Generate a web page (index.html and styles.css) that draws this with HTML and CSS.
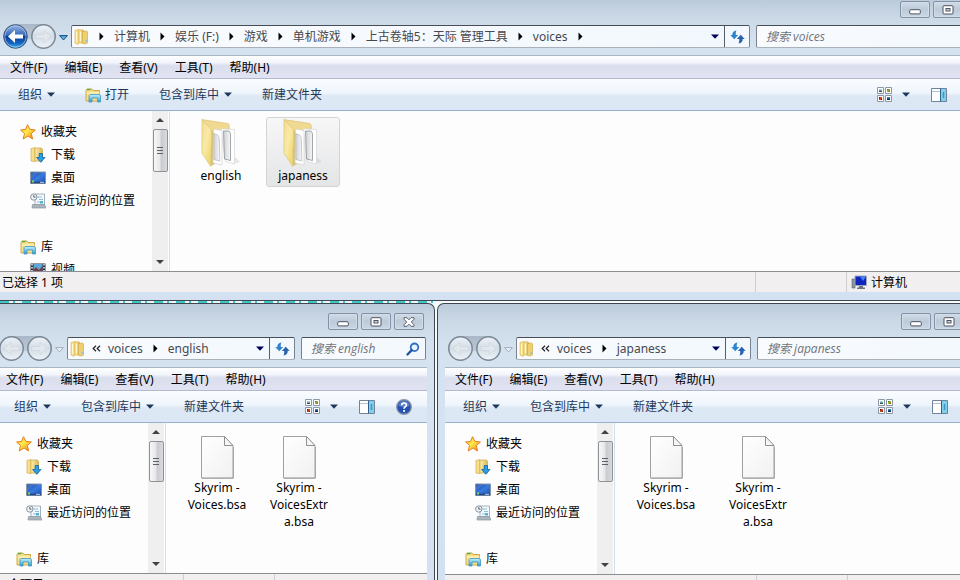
FILE: index.html
```html
<!DOCTYPE html>
<html lang="zh-CN">
<head>
<meta charset="utf-8">
<title>voices</title>
<link rel="stylesheet" href="styles.css">
</head>
<body>
<svg class="defs" aria-hidden="true">
  <defs>
    <linearGradient id="gGold" x1="0" y1="0" x2="1" y2="0"><stop offset="0" stop-color="#fdf0b0"/><stop offset="1" stop-color="#dcb553"/></linearGradient>
    <linearGradient id="gFlap" x1="0" y1="0" x2="1" y2="1"><stop offset="0" stop-color="#f3dc92"/><stop offset=".45" stop-color="#f9e9a8"/><stop offset="1" stop-color="#eed24e"/></linearGradient>
    <linearGradient id="gBlue" x1="0" y1="0" x2="0" y2="1"><stop offset="0" stop-color="#9db9e4"/><stop offset=".45" stop-color="#3566b8"/><stop offset=".5" stop-color="#0b3a94"/><stop offset=".8" stop-color="#1769c4"/><stop offset="1" stop-color="#3fc6f5"/></linearGradient>
    <linearGradient id="gGrey" x1="0" y1="0" x2="0" y2="1"><stop offset="0" stop-color="#edf2f7"/><stop offset=".5" stop-color="#d3dde7"/><stop offset="1" stop-color="#eef3f8"/></linearGradient>
    <linearGradient id="gScreen" x1="0" y1="0" x2="1" y2="1"><stop offset="0" stop-color="#123f99"/><stop offset=".5" stop-color="#3a7be0"/><stop offset="1" stop-color="#1c4cab"/></linearGradient>
    <linearGradient id="gStar" x1="0" y1="0" x2="1" y2="1"><stop offset="0" stop-color="#ffb52a"/><stop offset=".45" stop-color="#ffec4a"/><stop offset="1" stop-color="#f3701c"/></linearGradient>
    <linearGradient id="gPage" x1="0" y1="0" x2="1" y2="1"><stop offset="0" stop-color="#fff"/><stop offset="1" stop-color="#f1f1f1"/></linearGradient>
    <linearGradient id="gSheet" x1="0" y1="0" x2="1" y2="0"><stop offset="0" stop-color="#cfd1d3"/><stop offset="1" stop-color="#f7f7f7"/></linearGradient>
    <linearGradient id="gCyan" x1="0" y1="0" x2="0" y2="1"><stop offset="0" stop-color="#c2f0fa"/><stop offset="1" stop-color="#2d9bd3"/></linearGradient>
  </defs>
  <symbol id="i-back-on" viewBox="0 0 25 25">
    <circle cx="12.500" cy="12.500" r="11.800" fill="url(#gBlue)" stroke="#42587c"/>
    <circle cx="12.500" cy="12.500" r="10.600" fill="none" stroke="#a9c8ee" stroke-opacity=".7"/>
    <path d="M5 12.500 12 6v4.500h8v4h-8V19z" fill="#fff"/>
  </symbol>
  <symbol id="i-back" viewBox="0 0 25 25">
    <circle cx="12.500" cy="12.500" r="11.700" fill="url(#gGrey)" stroke="#7b8794" stroke-width="1.500"/>
    <path d="M5 12.500 12 6.500v4h8v4h-8v4z" fill="#e2e7ec" stroke="#ccd4dd" stroke-width=".6"/>
  </symbol>
  <symbol id="i-fwd" viewBox="0 0 25 25">
    <circle cx="12.500" cy="12.500" r="11.700" fill="url(#gGrey)" stroke="#7b8794" stroke-width="1.500"/>
    <path d="M20 12.500 13 6.500v4H5v4h8v4z" fill="#e2e7ec" stroke="#ccd4dd" stroke-width=".6"/>
  </symbol>
  <symbol id="i-recent" viewBox="0 0 9 6"><path d="M.6.600h7.800L4.500 5z" fill="#4fb4e0" stroke="#1c4a80"/></symbol>
  <symbol id="i-recent-off" viewBox="0 0 9 6"><path d="M.6.600h7.800L4.500 5z" fill="#e9eff6" stroke="#a0adbd"/></symbol>
  <symbol id="i-folder" viewBox="0 0 15 16">
    <path d="M1 1.500 5 .5v13L4 15.500 1 14z" fill="#f7e08c" stroke="#d9b24d" stroke-width=".6"/>
    <path d="M5 .8h4l.8 1.200V14H5z" fill="url(#gGold)" stroke="#d6b048" stroke-width=".6"/>
    <path d="M8.500 2.500 12.500 2l1 .8V14l-2 1-3-.5z" fill="#efcf6e" stroke="#cfa440" stroke-width=".6"/>
    <path d="M11.500 10.500h1.800v2.500h-1.800z" fill="#8cc5e4"/>
    <path d="M2.500 3v10M6.500 3v9" stroke="#fff8cf"/>
  </symbol>
  <symbol id="i-arrow" viewBox="0 0 5 9"><path d="M.5.500v8l4-4z" fill="#000"/></symbol>
  <symbol id="i-more" viewBox="0 0 9 8"><path d="M4 .8 1.200 3.500 4 6.200M8 .8 5.200 3.500 8 6.200" fill="none" stroke="#222" stroke-width="1.200"/></symbol>
  <symbol id="i-drop" viewBox="0 0 8 5"><path d="M0 .5h8L4 4.700z" fill="currentColor"/></symbol>
  <symbol id="i-refresh" viewBox="0 0 15 14">
    <path d="M6.500.5C3.500.8 2.300 2.500 2.300 5H.3l3.900 4.300L8.200 5H5.800C5.700 3 5.700 1.800 6.500.5z" fill="#2d83cf"/>
    <path d="M8.500 13.500c3-.3 4.200-2 4.200-4.500h2l-3.900-4.300L6.800 9h2.400c.1 2 .1 3.200-.7 4.500z" fill="#2a62b0"/>
  </symbol>
  <symbol id="i-search" viewBox="0 0 14 14">
    <circle cx="8.500" cy="5.300" r="3.800" fill="#e8f4fd" stroke="#2d6fc0" stroke-width="1.800"/>
    <path d="M5.700 8.200 1.500 12.500" stroke="#27549c" stroke-width="2.400" stroke-linecap="round"/>
  </symbol>
  <symbol id="i-min" viewBox="0 0 12 6"><rect x=".7" y=".7" width="10.600" height="4.200" rx="1" fill="#fff" stroke="#4d5260"/></symbol>
  <symbol id="i-max" viewBox="0 0 12 10"><rect x="1" y=".7" width="10" height="8.300" rx="1" fill="#fff" stroke="#4d5260"/><rect x="4" y="3.500" width="4" height="2.500" fill="#c9d6e4" stroke="#4d5260"/></symbol>
  <symbol id="i-close" viewBox="0 0 12 10"><path d="M1 .7h2.900L6 2.800 8.100.7H11v1.500L8.300 5 11 7.800v1.500H8.100L6 7.200 3.900 9.300H1V7.800L3.700 5 1 2.200z" fill="#fff" stroke="#4d5260" stroke-width=".9"/></symbol>
  <symbol id="i-lib" viewBox="0 0 16 16">
    <path d="M1 3.500 2 2h5l1 1.500h6.500V14H1z" fill="#f6e08c" stroke="#cfa949"/>
    <path d="M2 2.600h3.500" stroke="#57ad3e" stroke-width="1.400"/>
    <path d="M1.500 6h13" stroke="#fff7cc"/>
    <path d="M4 8.500 5 7.500h9l1.500 1V15h-3v-4H7v4H4z" fill="url(#gCyan)" stroke="#3f95c4" stroke-width=".8"/>
  </symbol>
  <symbol id="i-views" viewBox="0 0 15 15">
    <path d="M.5.500h6v6h-6zM8.500.5h6v6h-6zM.5 8.500h6v6h-6zM8.500 8.500h6v6h-6z" fill="#fff" stroke="#8d98a6"/>
    <path d="M2 2h3v1.500H2z" fill="#8ed5ea"/><path d="M2 3.500h3V5H2z" fill="#2a5a44"/>
    <path d="M10 2h3v3h-3z" fill="#8dbb2e"/><path d="M11.500 3.500H13V5h-1.500z" fill="#c94b1d"/><path d="M10 2h1.500v1H10z" fill="#2d8a3d"/>
    <path d="M2 10h3v3H2z" fill="#d2401a"/><path d="M2 10h1v1.500H2zM4 12h1v1H4z" fill="#5b1606"/>
    <path d="M10 10h3v3h-3z" fill="#3f7fc0"/><path d="M10 11.500h3V13h-3z" fill="#132b49"/>
  </symbol>
  <symbol id="i-pane" viewBox="0 0 16 14">
    <path d="M.5.500h15v13H.5z" fill="#fff" stroke="#70839b"/>
    <path d="M1 3.500h9" stroke="#b7c4d4"/>
    <path d="M10 1h5v12h-5z" fill="#7fd0ea"/><path d="M9.500.5v13" stroke="#31628e"/><path d="M12.500 4v6" stroke="#4095c0" stroke-width="1.500"/>
  </symbol>
  <symbol id="i-help" viewBox="0 0 16 16">
    <circle cx="8" cy="8" r="7.300" fill="#2450b0" stroke="#8b94a5" stroke-width="1.400"/>
    <path d="M2.500 7a5.500 5 0 0 1 11 0Q8 9 2.500 7z" fill="#7f9fe0" opacity=".6"/>
    <path d="M5.700 6.200C5.700 3.300 10.500 3.400 10.400 6c0 1.700-2.300 1.700-2.300 3.700" fill="none" stroke="#fff" stroke-width="1.700"/><circle cx="8.100" cy="12" r="1.100" fill="#fff"/>
  </symbol>
  <symbol id="i-star" viewBox="0 0 16 16"><path d="M7.500.7 9.800 5.300 15.400 6 11.300 9.500 12.600 15 8 12 3.200 15 4.500 9.500.6 6l5-.6z" fill="url(#gStar)" stroke="#e3801d" stroke-linejoin="round"/></symbol>
  <symbol id="i-down" viewBox="0 0 16 16">
    <path d="M1 1.500 5 .6v14L1 14z" fill="#f7e08c" stroke="#d0aa4c" stroke-width=".7"/>
    <path d="M5 1h6.500l1 1.500V14H5z" fill="url(#gGold)" stroke="#cda648" stroke-width=".7"/>
    <path d="M9.200 6.500h3.300v4H15l-4.200 4.800L6.600 10.500h2.600z" fill="#2ba0e6" stroke="#14629f" stroke-width=".8"/>
  </symbol>
  <symbol id="i-desk" viewBox="0 0 16 14">
    <path d="M.5 1h15v11.500H.5z" fill="url(#gScreen)" stroke="#8795a9"/>
    <path d="M1 10.500h14v1.800H1z" fill="#254a83"/><path d="M2 9.500h2v2H2z" fill="#7ed957"/><path d="M1 2 8 2 1 8z" fill="#739ce0" opacity=".35"/><path d="M10 11.300h4" stroke="#b9d4f4"/>
  </symbol>
  <symbol id="i-places" viewBox="0 0 16 16">
    <path d="M5 1h9.500v11H5z" fill="#f4f9fd" stroke="#a3b0bc"/>
    <path d="M7 4h5M9 6.500h4M7 9h3" stroke="#8cbcd8"/><path d="M10 8h3v2.500h-3z" fill="#4fb5d9"/>
    <path d="M2.500 11.500h12L16 15H2z" fill="#aab4bd" stroke="#8b959e" stroke-width=".7"/>
    <circle cx="3.800" cy="4" r="3.200" fill="#f1f5f8" stroke="#8494a2"/><path d="M3.800 2v2.200h1.700" fill="none" stroke="#566"/>
  </symbol>
  <symbol id="i-video" viewBox="0 0 16 14">
    <path d="M.5.500h15v13H.5z" fill="#26333a"/><path d="M3.500 1h9v9.500h-9z" fill="#5fa9da"/><path d="M3.500 7 6 4l3 3 3.500-4v7.500h-9z" fill="#783b45"/>
    <path d="M2 1v12M14 1v12" stroke="#e8f1f4" stroke-width="1.500" stroke-dasharray="1.500 1.500"/>
  </symbol>
  <symbol id="i-pc" viewBox="0 0 16 15">
    <path d="M1 4h3v9H1z" fill="#8f969e" stroke="#596069" stroke-width=".6"/><path d="M4 1h11.500v9.500H4z" fill="#0f25c0" stroke="#a4a9ba"/>
    <path d="M9 1.500h6L12 6z" fill="#4c83f4"/><path d="M8 11h4v1.500h2V14H6v-1.500h2z" fill="#6d747f"/>
  </symbol>
  <symbol id="i-bigfolder" viewBox="0 0 40 48">
    <path d="M1 .6 26.500 4.500q1.700.3 1.700 2V14H10z" fill="#f0da92" stroke="#dcc16f" stroke-width=".7"/>
    <path d="M10 12h4v33l-4 2z" fill="#d9c078"/>
    <path d="M34 38l5 5-7 2z" fill="#c4c4c4" opacity=".4"/>
    <path d="M20 9.800 33.500 10.500V45l-9-2.500z" fill="#fff" stroke="#d5d6d8" stroke-width=".7"/>
    <path d="M22.500 12h5.500q1.500 1.500 1.500 4v25.500l-6-1.500z" fill="url(#gSheet)" stroke="#8e9297" stroke-width=".8"/>
    <path d="M12.500 10 21 11.500V46l-9-2z" fill="#fff" stroke="#cfd0d2" stroke-width=".7"/>
    <path d="M12.800 14.500 16.500 16q1.800 1.500 1.800 4l.5 22-6-1.500z" fill="url(#gSheet)" stroke="#b4b6b9" stroke-width=".7"/>
    <path d="M1 .6 9 9q1.700 1.800 1.700 4.500V26q-1 3-1 5v16.500L1 34z" fill="url(#gFlap)" stroke="#dcc473" stroke-width=".7"/>
  </symbol>
  <symbol id="i-file" viewBox="0 0 33 43">
    <path d="M.5.500h23l8.500 9.500v32H.5z" fill="url(#gPage)" stroke="#a0a0a0"/>
    <path d="M1 42.300h31.500V11" fill="none" stroke="#808080" stroke-opacity=".5"/>
    <path d="M23.500.5V9.500H32z" fill="#f6f6f6" stroke="#8f8f8f" stroke-linejoin="round"/>
  </symbol>
</svg>

<main class="desktop">
  <section class="window window-top" aria-label="voices">
    <div class="caption">
      <button class="cap-btn" aria-label="最小化"><svg width="12" height="6"><use href="#i-min"/></svg></button>
      <button class="cap-btn cap-max" aria-label="最大化"><svg width="12" height="10"><use href="#i-max"/></svg></button>
      <button class="cap-btn cap-close" aria-label="关闭"><svg width="12" height="10"><use href="#i-close"/></svg></button>
    </div>
    <div class="navrow">
      <div class="travel">
        <button class="round" aria-label="后退"><svg width="25" height="25"><use href="#i-back-on"/></svg></button>
        <button class="round" aria-label="前进"><svg width="25" height="25"><use href="#i-fwd"/></svg></button>
      </div>
      <button class="recent" aria-label="最近页面"><svg width="9" height="6"><use href="#i-recent"/></svg></button>
      <div class="address">
        <nav class="crumbs">
          <svg width="15" height="16"><use href="#i-folder"/></svg>
          <svg class="sep" width="5" height="9"><use href="#i-arrow"/></svg>
          <a href="#">计算机</a><svg class="sep" width="5" height="9"><use href="#i-arrow"/></svg>
          <a href="#">娱乐 (F:)</a><svg class="sep" width="5" height="9"><use href="#i-arrow"/></svg>
          <a href="#">游戏</a><svg class="sep" width="5" height="9"><use href="#i-arrow"/></svg>
          <a href="#">单机游戏</a><svg class="sep" width="5" height="9"><use href="#i-arrow"/></svg>
          <a href="#">上古卷轴5：天际 管理工具</a><svg class="sep" width="5" height="9"><use href="#i-arrow"/></svg>
          <a href="#">voices</a><svg class="sep" width="5" height="9"><use href="#i-arrow"/></svg>
        </nav>
        <button class="history" aria-label="以前的位置"><svg width="8" height="5"><use href="#i-drop"/></svg></button>
        <button class="refresh" aria-label="刷新"><svg width="15" height="14"><use href="#i-refresh"/></svg></button>
      </div>
      <label class="search"><input type="text" placeholder="搜索 voices" aria-label="搜索 voices"></label>
    </div>
    <div class="client">
      <div class="menubar"><button>文件(F)</button><button>编辑(E)</button><button>查看(V)</button><button>工具(T)</button><button>帮助(H)</button></div>
      <div class="toolbar">
        <button>组织<svg class="drop" width="8" height="5"><use href="#i-drop"/></svg></button>
        <button><svg class="lead" width="16" height="16"><use href="#i-lib"/></svg>打开</button>
        <button>包含到库中<svg class="drop" width="8" height="5"><use href="#i-drop"/></svg></button>
        <button>新建文件夹</button>
        <div class="tools">
          <button aria-label="更改视图"><svg width="15" height="15"><use href="#i-views"/></svg><svg class="viewdrop" width="8" height="5"><use href="#i-drop"/></svg></button>
          <button aria-label="预览窗格"><svg width="16" height="14"><use href="#i-pane"/></svg></button>
          <button aria-label="帮助"><svg width="16" height="16"><use href="#i-help"/></svg></button>
        </div>
      </div>
      <div class="panes">
        <ul class="tree">
          <li><svg width="16" height="16"><use href="#i-star"/></svg>收藏夹</li>
          <li class="sub"><svg width="16" height="16"><use href="#i-down"/></svg>下载</li>
          <li class="sub"><svg width="16" height="14"><use href="#i-desk"/></svg>桌面</li>
          <li class="sub"><svg width="16" height="16"><use href="#i-places"/></svg>最近访问的位置</li>
          <li class="group"><svg width="16" height="16"><use href="#i-lib"/></svg>库</li>
          <li class="sub"><svg width="16" height="14"><use href="#i-video"/></svg>视频</li>
        </ul>
        <div class="scroll" aria-hidden="true"><i class="up"></i><i class="thumb"></i><i class="down"></i></div>
        <ul class="files">
          <li><svg width="40" height="48"><use href="#i-bigfolder"/></svg><span>english</span></li>
          <li class="selected"><svg width="40" height="48"><use href="#i-bigfolder"/></svg><span>japaness</span></li>
        </ul>
      </div>
      <div class="status"><span class="count">已选择 1 项</span><span class="cell"></span><span class="cell place"><svg width="16" height="15"><use href="#i-pc"/></svg>计算机</span></div>
    </div>
  </section>

  <section class="window window-left" aria-label="english">
    <div class="caption">
      <button class="cap-btn" aria-label="最小化"><svg width="12" height="6"><use href="#i-min"/></svg></button>
      <button class="cap-btn cap-max" aria-label="最大化"><svg width="12" height="10"><use href="#i-max"/></svg></button>
      <button class="cap-btn cap-close" aria-label="关闭"><svg width="12" height="10"><use href="#i-close"/></svg></button>
    </div>
    <div class="navrow">
      <div class="travel">
        <button class="round" aria-label="后退"><svg width="25" height="25"><use href="#i-back"/></svg></button>
        <button class="round" aria-label="前进"><svg width="25" height="25"><use href="#i-fwd"/></svg></button>
      </div>
      <button class="recent" aria-label="最近页面"><svg width="9" height="6"><use href="#i-recent-off"/></svg></button>
      <div class="address">
        <nav class="crumbs">
          <svg width="15" height="16"><use href="#i-folder"/></svg>
          <svg class="more" width="9" height="8"><use href="#i-more"/></svg>
          <a href="#">voices</a><svg class="sep" width="5" height="9"><use href="#i-arrow"/></svg>
          <a href="#">english</a>
        </nav>
        <button class="history" aria-label="以前的位置"><svg width="8" height="5"><use href="#i-drop"/></svg></button>
        <button class="refresh" aria-label="刷新"><svg width="15" height="14"><use href="#i-refresh"/></svg></button>
      </div>
      <label class="search"><input type="text" placeholder="搜索 english" aria-label="搜索 english"><svg width="14" height="14"><use href="#i-search"/></svg></label>
    </div>
    <div class="client">
      <div class="menubar"><button>文件(F)</button><button>编辑(E)</button><button>查看(V)</button><button>工具(T)</button><button>帮助(H)</button></div>
      <div class="toolbar">
        <button>组织<svg class="drop" width="8" height="5"><use href="#i-drop"/></svg></button>
        <button>包含到库中<svg class="drop" width="8" height="5"><use href="#i-drop"/></svg></button>
        <button>新建文件夹</button>
        <div class="tools">
          <button aria-label="更改视图"><svg width="15" height="15"><use href="#i-views"/></svg><svg class="viewdrop" width="8" height="5"><use href="#i-drop"/></svg></button>
          <button aria-label="预览窗格"><svg width="16" height="14"><use href="#i-pane"/></svg></button>
          <button aria-label="帮助"><svg width="16" height="16"><use href="#i-help"/></svg></button>
        </div>
      </div>
      <div class="panes">
        <ul class="tree">
          <li><svg width="16" height="16"><use href="#i-star"/></svg>收藏夹</li>
          <li class="sub"><svg width="16" height="16"><use href="#i-down"/></svg>下载</li>
          <li class="sub"><svg width="16" height="14"><use href="#i-desk"/></svg>桌面</li>
          <li class="sub"><svg width="16" height="16"><use href="#i-places"/></svg>最近访问的位置</li>
          <li class="group"><svg width="16" height="16"><use href="#i-lib"/></svg>库</li>
        </ul>
        <div class="scroll" aria-hidden="true"><i class="up"></i><i class="thumb"></i><i class="down"></i></div>
        <ul class="files">
          <li><svg class="doc" width="33" height="43"><use href="#i-file"/></svg><span>Skyrim - Voices.bsa</span></li>
          <li><svg class="doc" width="33" height="43"><use href="#i-file"/></svg><span>Skyrim - VoicesExtra.bsa</span></li>
        </ul>
      </div>
      <div class="status"><span class="count">2 个项目</span><span class="cell"></span><span class="cell place"></span></div>
    </div>
  </section>

  <section class="window window-right" aria-label="japaness">
    <div class="caption">
      <button class="cap-btn" aria-label="最小化"><svg width="12" height="6"><use href="#i-min"/></svg></button>
      <button class="cap-btn cap-max" aria-label="最大化"><svg width="12" height="10"><use href="#i-max"/></svg></button>
      <button class="cap-btn cap-close" aria-label="关闭"><svg width="12" height="10"><use href="#i-close"/></svg></button>
    </div>
    <div class="navrow">
      <div class="travel">
        <button class="round" aria-label="后退"><svg width="25" height="25"><use href="#i-back"/></svg></button>
        <button class="round" aria-label="前进"><svg width="25" height="25"><use href="#i-fwd"/></svg></button>
      </div>
      <button class="recent" aria-label="最近页面"><svg width="9" height="6"><use href="#i-recent-off"/></svg></button>
      <div class="address">
        <nav class="crumbs">
          <svg width="15" height="16"><use href="#i-folder"/></svg>
          <svg class="more" width="9" height="8"><use href="#i-more"/></svg>
          <a href="#">voices</a><svg class="sep" width="5" height="9"><use href="#i-arrow"/></svg>
          <a href="#">japaness</a>
        </nav>
        <button class="history" aria-label="以前的位置"><svg width="8" height="5"><use href="#i-drop"/></svg></button>
        <button class="refresh" aria-label="刷新"><svg width="15" height="14"><use href="#i-refresh"/></svg></button>
      </div>
      <label class="search"><input type="text" placeholder="搜索 japaness" aria-label="搜索 japaness"></label>
    </div>
    <div class="client">
      <div class="menubar"><button>文件(F)</button><button>编辑(E)</button><button>查看(V)</button><button>工具(T)</button><button>帮助(H)</button></div>
      <div class="toolbar">
        <button>组织<svg class="drop" width="8" height="5"><use href="#i-drop"/></svg></button>
        <button>包含到库中<svg class="drop" width="8" height="5"><use href="#i-drop"/></svg></button>
        <button>新建文件夹</button>
        <div class="tools">
          <button aria-label="更改视图"><svg width="15" height="15"><use href="#i-views"/></svg><svg class="viewdrop" width="8" height="5"><use href="#i-drop"/></svg></button>
          <button aria-label="预览窗格"><svg width="16" height="14"><use href="#i-pane"/></svg></button>
          <button aria-label="帮助"><svg width="16" height="16"><use href="#i-help"/></svg></button>
        </div>
      </div>
      <div class="panes">
        <ul class="tree">
          <li><svg width="16" height="16"><use href="#i-star"/></svg>收藏夹</li>
          <li class="sub"><svg width="16" height="16"><use href="#i-down"/></svg>下载</li>
          <li class="sub"><svg width="16" height="14"><use href="#i-desk"/></svg>桌面</li>
          <li class="sub"><svg width="16" height="16"><use href="#i-places"/></svg>最近访问的位置</li>
          <li class="group"><svg width="16" height="16"><use href="#i-lib"/></svg>库</li>
        </ul>
        <div class="scroll" aria-hidden="true"><i class="up"></i><i class="thumb"></i><i class="down"></i></div>
        <ul class="files">
          <li><svg class="doc" width="33" height="43"><use href="#i-file"/></svg><span>Skyrim - Voices.bsa</span></li>
          <li><svg class="doc" width="33" height="43"><use href="#i-file"/></svg><span>Skyrim - VoicesExtra.bsa</span></li>
        </ul>
      </div>
      <div class="status"><span class="count"></span><span class="cell"></span><span class="cell place"></span></div>
    </div>
  </section>
</main>
</body>
</html>
```
FILE: styles.css
```css
* { box-sizing: border-box; }

body {
  margin: 0;
  height: 100vh;
  overflow: hidden;
  background: #f4fbfb;
  color: #000;
  font: 12px/17px "Noto Sans", "Open Sans", "Noto Sans CJK SC", sans-serif;
}

.defs { position: absolute; width: 0; height: 0; }
svg { display: block; flex: none; }
ul { margin: 0; padding: 0; list-style: none; }

button {
  display: flex;
  align-items: center;
  margin: 0;
  padding: 0;
  border: 0;
  background: none;
  color: inherit;
  font: inherit;
  white-space: nowrap;
}

/* Windows on the desktop */
.desktop {
  display: grid;
  grid-template-columns: 435fr 523fr;
  grid-template-rows: 301px 1fr;
  gap: 2px;
  background: repeating-linear-gradient(90deg, #3cc6c8 0 9px, #eefafa 9px 13px, #3cc6c8 13px 15px, #eefafa 15px 22px) 0 301px / 440px 2px no-repeat, #f4fbfb;
}

.window {
  min-width: 0;
  padding: 0 7px;
  border: 1px solid #41464e;
  background: linear-gradient(#bccbda, #cbd9e7 18px, #d3e1ee 40px, #d5e3f1 60px, #d3e1f2);
}

/* The top and right windows run past the edge of the desktop */
.window-top {
  grid-column: 1 / -1;
  margin-right: -47px;
  padding: 0 7px 8px 0;
  border-width: 0 1px 1px 0;
}
.window-left {
  margin-left: -4px;
  padding-left: 0;
  border-width: 1px 1px 0 0;
  border-top-right-radius: 7px;
}
.window-right {
  margin-right: -48px;
  border-bottom: 0;
  border-top-left-radius: 7px;
}

/* Title bar */
.caption {
  display: flex;
  justify-content: flex-end;
  gap: 3px;
  padding: 9px 3px 7px 0;
}
.window-top .caption { padding-top: 1px; }
.cap-btn {
  justify-content: center;
  width: 30px;
  height: 17px;
  border: 1px solid #8391a6;
  border-radius: 2px;
  background: linear-gradient(#d0dbe7, #bccad9 50%, #cad7e4);
  box-shadow: inset 0 0 0 1px #d3dde8;
}
.cap-btn:first-child { padding-top: 4px; }

/* Navigation row */
.navrow {
  display: flex;
  align-items: center;
  height: 23px;
  margin-bottom: 7px;
  padding: 0 1px 0 3px;
}
.travel {
  display: flex;
  gap: 3px;
  border-radius: 13px;
  background: linear-gradient(#a9b7c6, #bdcad8 60%, transparent 60%);
}
.round { border-radius: 50%; }
.recent { margin: 2px 3px 0; }

.address {
  display: flex;
  flex: 1;
  align-self: stretch;
  min-width: 0;
  margin-right: 6px;
}
.address, .search {
  border: 1px solid #78838f;
  border-top-color: #474e57;
  border-bottom-color: #a9b1bb;
  border-radius: 2px;
  background: linear-gradient(90deg, #f9fbfe, #f2f8fd);
}
.crumbs {
  display: flex;
  flex: 1;
  align-items: center;
  min-width: 0;
  padding-left: 2px;
  color: #45494f;
  white-space: nowrap;
}
.crumbs a { color: inherit; text-decoration: none; }
.sep { margin: 0 10px; }
.more { margin: 0 7px; }
.history { width: 19px; justify-content: center; color: #00005a; }
.refresh { width: 25px; justify-content: center; border-left: 1px solid #565d66; }

.search {
  display: flex;
  align-items: center;
  align-self: stretch;
  width: 242px;
  padding: 0 5px 0 9px;
}
.window-left .search { width: 125px; }
.search input {
  flex: 1;
  min-width: 0;
  padding: 0;
  border: 0;
  outline: 0;
  background: none;
  font: italic 12px/17px "Open Sans", "Noto Sans CJK SC", sans-serif;
}
.search input::placeholder { color: #70747a; opacity: 1; }

/* Menu and command bars */
.menubar {
  display: flex;
  gap: 17px;
  height: 24px;
  padding-left: 10px;
  border-top: 1px solid #a9b4c6;
  border-bottom: 1px solid #b1b9d0;
  background: linear-gradient(#fff, #f1f4fb 30%, #dadeed 45%, #e2e3f2);
}
.toolbar {
  display: flex;
  gap: 30px;
  height: 32px;
  padding: 0 15px 0 18px;
  border-bottom: 1px solid #9aafca;
  background: linear-gradient(#fbfdff, #eef5fc 45%, #dde8f5 55%, #dce7f5);
  color: #1e395b;
}
.drop { margin-left: 5px; }
.lead { margin-right: 4px; }
.tools { display: flex; gap: 21px; margin-left: auto; }
.viewdrop { margin-left: 10px; }

/* Tree, scroll bar and file list */
.panes {
  display: flex;
  height: 160px;
  overflow: hidden;
  background: #fdfdfe;
}
.window-left .panes { height: 150px; }
.window-right .panes { height: 151px; }
.tree { width: 152px; padding: 9px 0 0 20px; overflow: hidden; }
.tree li {
  display: flex;
  align-items: center;
  gap: 5px;
  height: 23px;
  white-space: nowrap;
}
.tree .sub { padding-left: 10px; }
.tree .group { margin-top: 23px; }

.scroll {
  display: flex;
  flex-direction: column;
  align-items: center;
  width: 16px;
  background: #efeff0;
}
.up, .down { border: 4px solid transparent; }
.up { margin: 7px 0; border-bottom-color: #3f4347; border-top-width: 0; }
.down { margin: auto 0 7px; border-top-color: #3f4347; border-bottom-width: 0; }
.thumb {
  width: 15px;
  height: 27%;
  border: 1px solid #8e9196;
  border-radius: 2px;
  background:
    repeating-linear-gradient(#5c6066 0 1px, transparent 1px 3px) 3px 50% / 6px 7px no-repeat,
    linear-gradient(90deg, #f7f7f7, #e6e7e9 45%, #c9cbcf 55%, #d9dadd);
}
.files {
  display: flex;
  flex: 1;
  align-items: flex-start;
  gap: 8px;
  margin-left: 1px;
  padding: 6px 0 0 14px;
  border-left: 1px solid #d5dfec;
}
.window-right .files { gap: 18px; }
.files li {
  display: flex;
  flex-direction: column;
  align-items: center;
  width: 74px;
  padding: 1px 4px 2px;
  border: 1px solid transparent;
  border-radius: 3px;
  text-align: center;
}
.files span { overflow-wrap: anywhere; }
.doc { margin: 5px 0 0; }
.files .selected {
  border-color: #d3d4d6;
  background: linear-gradient(#f7f7f8, #e4e5e6);
}

/* Status bar */
.status {
  display: flex;
  height: 21px;
  border-top: 1px solid #8b8d93;
  background: #f1efef;
  line-height: 21px;
}
.count { flex: 1; padding-left: 2px; }
.cell {
  display: flex;
  align-items: center;
  gap: 4px;
  width: 91px;
  padding-left: 4px;
  border-left: 1px solid #cfcdcf;
}
.place { width: 153px; }
```
